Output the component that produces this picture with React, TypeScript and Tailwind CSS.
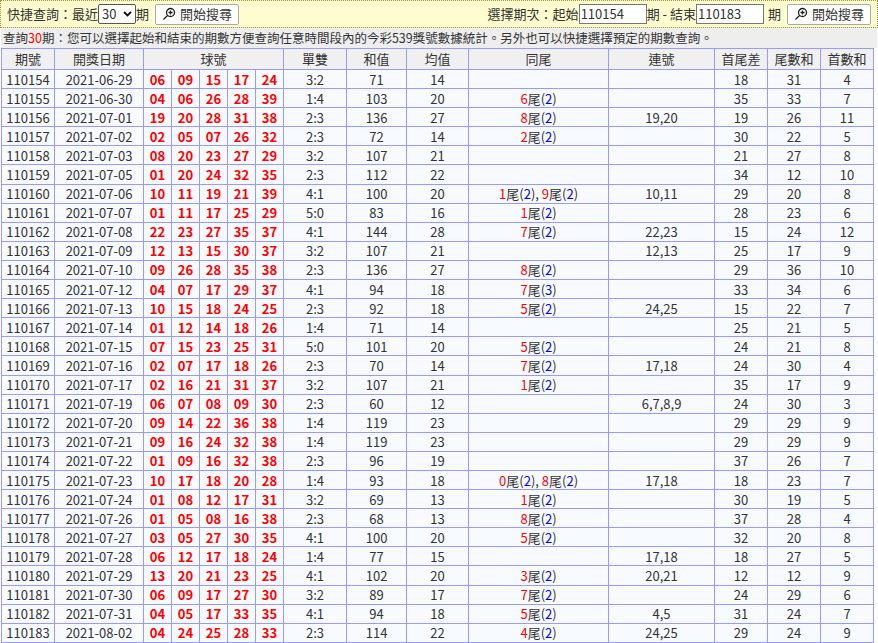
import React from "react";

const raw = `110154|2021-06-29|06 09 15 17 24|3:2|71|14||
110155|2021-06-30|04 06 26 28 39|1:4|103|20|6:2|
110156|2021-07-01|19 20 28 31 38|2:3|136|27|8:2|19,20
110157|2021-07-02|02 05 07 26 32|2:3|72|14|2:2|
110158|2021-07-03|08 20 23 27 29|3:2|107|21||
110159|2021-07-05|01 20 24 32 35|2:3|112|22||
110160|2021-07-06|10 11 19 21 39|4:1|100|20|1:2,9:2|10,11
110161|2021-07-07|01 11 17 25 29|5:0|83|16|1:2|
110162|2021-07-08|22 23 27 35 37|4:1|144|28|7:2|22,23
110163|2021-07-09|12 13 15 30 37|3:2|107|21||12,13
110164|2021-07-10|09 26 28 35 38|2:3|136|27|8:2|
110165|2021-07-12|04 07 17 29 37|4:1|94|18|7:3|
110166|2021-07-13|10 15 18 24 25|2:3|92|18|5:2|24,25
110167|2021-07-14|01 12 14 18 26|1:4|71|14||
110168|2021-07-15|07 15 23 25 31|5:0|101|20|5:2|
110169|2021-07-16|02 07 17 18 26|2:3|70|14|7:2|17,18
110170|2021-07-17|02 16 21 31 37|3:2|107|21|1:2|
110171|2021-07-19|06 07 08 09 30|2:3|60|12||6,7,8,9
110172|2021-07-20|09 14 22 36 38|1:4|119|23||
110173|2021-07-21|09 16 24 32 38|1:4|119|23||
110174|2021-07-22|01 09 16 32 38|2:3|96|19||
110175|2021-07-23|10 17 18 20 28|1:4|93|18|0:2,8:2|17,18
110176|2021-07-24|01 08 12 17 31|3:2|69|13|1:2|
110177|2021-07-26|01 05 08 16 38|2:3|68|13|8:2|
110178|2021-07-27|03 05 27 30 35|4:1|100|20|5:2|
110179|2021-07-28|06 12 17 18 24|1:4|77|15||17,18
110180|2021-07-29|13 20 21 23 25|4:1|102|20|3:2|20,21
110181|2021-07-30|06 09 17 27 30|3:2|89|17|7:2|
110182|2021-07-31|04 05 17 33 35|4:1|94|18|5:2|4,5
110183|2021-08-02|04 24 25 28 33|2:3|114|22|4:2|24,25`;
const tail = [[18,31,4],[35,33,7],[19,26,11],[30,22,5],[21,27,8],[34,12,10],[29,20,8],[28,23,6],[15,24,12],[25,17,9],[29,36,10],[33,34,6],[15,22,7],[25,21,5],[24,21,8],[24,30,4],[35,17,9],[24,30,3],[29,29,9],[29,29,9],[37,26,7],[18,23,7],[30,19,5],[37,28,4],[32,20,8],[18,27,5],[12,12,9],[24,29,6],[31,24,7],[29,24,9]];
const rows = raw.split("\n").map((l, i) => {
  const p = l.split("|");
  return { id: p[0], d: p[1], b: p[2].split(" "), eo: p[3], s: p[4], a: p[5], t: p[6] ? p[6].split(",").map(x => x.split(":")) : [], c: p[7] || "", x: tail[i] };
});

const bd = "border border-[#9999ff]";
const Btn = () => (
  <button className="h-[21px] px-[6px] border border-[#aaa] bg-white text-[13px] flex items-center gap-1 rounded-[2px]">
    <svg width="14" height="14" viewBox="0 0 14 14" fill="none" stroke="#222" strokeWidth="1.3"><circle cx="8.5" cy="5.5" r="4" /><path d="M8.5 3.5v4M6.5 5.5h4M5.5 8.5l-4 4" /></svg>
    開始搜尋
  </button>
);

export default function App() {
  return (
    <div className="w-[878px] h-[643px] overflow-hidden bg-white text-[#333] text-[13px]" style={{ fontFamily: '"Noto Sans CJK TC", "Liberation Sans", sans-serif' }}>
      <div className="h-[28px] bg-[#fffdd0] border border-dotted border-[#999933] flex items-center justify-between px-[6px]">
        <div className="flex items-center">
          快捷查詢：最近
          <span className="h-[20px] w-[38px] border border-[#555] rounded-[2px] bg-white flex items-center justify-between px-[3px] text-[13px]">30
            <svg width="9" height="6" viewBox="0 0 9 6" fill="none" stroke="#111" strokeWidth="1.8"><path d="M1 1l3.5 3.5L8 1" /></svg>
          </span>
          期<span className="ml-[6px]"><Btn /></span>
        </div>
        <div className="flex items-center">
          選擇期次：起始<span className="h-[20px] w-[68px] border border-[#777] bg-white px-[1px] leading-[18px]">110154</span>
          期 - 結束<span className="h-[20px] w-[68px] border border-[#777] bg-white px-[1px] leading-[18px]">110183</span>
          <span className="ml-[4px]">期</span><span className="ml-[6px]"><Btn /></span>
        </div>
      </div>
      <div className="mx-[1px] h-[20px] bg-[#eeeeee] leading-[20px] px-[2px] text-[12.5px] whitespace-nowrap">
        查詢<span className="text-[#ff0000]">30</span>期：您可以選擇起始和結束的期數方便查詢任意時間段內的今彩539獎號數據統計。另外也可以快捷選擇預定的期數查詢。
      </div>
      <table className="ml-[1px] border-collapse w-[873px] table-fixed text-center">
        <colgroup>
          <col className="w-[53px]" /><col className="w-[89px]" />
          <col className="w-[28px]" /><col className="w-[28px]" /><col className="w-[28px]" /><col className="w-[28px]" /><col className="w-[28px]" />
          <col className="w-[63px]" /><col className="w-[60px]" /><col className="w-[62px]" /><col className="w-[140px]" /><col className="w-[106px]" />
          <col className="w-[53px]" /><col className="w-[53px]" /><col className="w-[53px]" />
        </colgroup>
        <thead>
          <tr className="h-[21px] bg-[#f0f0f0]">
            {["期號", "開獎日期"].map(h => <th key={h} className={`${bd} font-normal p-0`}>{h}</th>)}
            <th colSpan={5} className={`${bd} font-normal p-0`}>球號</th>
            {["單雙", "和值", "均值", "同尾", "連號", "首尾差", "尾數和", "首數和"].map(h => <th key={h} className={`${bd} font-normal p-0`}>{h}</th>)}
          </tr>
        </thead>
        <tbody>
          {rows.map(r => (
            <tr key={r.id} className="h-[19.1px] bg-[#f7faff] leading-[17px]">
              <td className={`${bd} p-0`}>{r.id}</td>
              <td className={`${bd} p-0`}>{r.d}</td>
              {r.b.map((n, i) => <td key={i} className={`${bd} p-0 font-bold text-[#ff0000]`}>{n}</td>)}
              <td className={`${bd} p-0`}>{r.eo}</td>
              <td className={`${bd} p-0`}>{r.s}</td>
              <td className={`${bd} p-0`}>{r.a}</td>
              <td className={`${bd} p-0`}>
                {r.t.map((t, i) => (
                  <span key={i}>{i > 0 ? ", " : ""}<span className="text-[#ff0000]">{t[0]}</span>尾(<span className="text-[#0000ff]">{t[1]}</span>)</span>
                ))}
              </td>
              <td className={`${bd} p-0`}>{r.c}</td>
              {r.x.map((v, i) => <td key={i} className={`${bd} p-0`}>{v}</td>)}
            </tr>
          ))}
        </tbody>
      </table>
    </div>
  );
}
